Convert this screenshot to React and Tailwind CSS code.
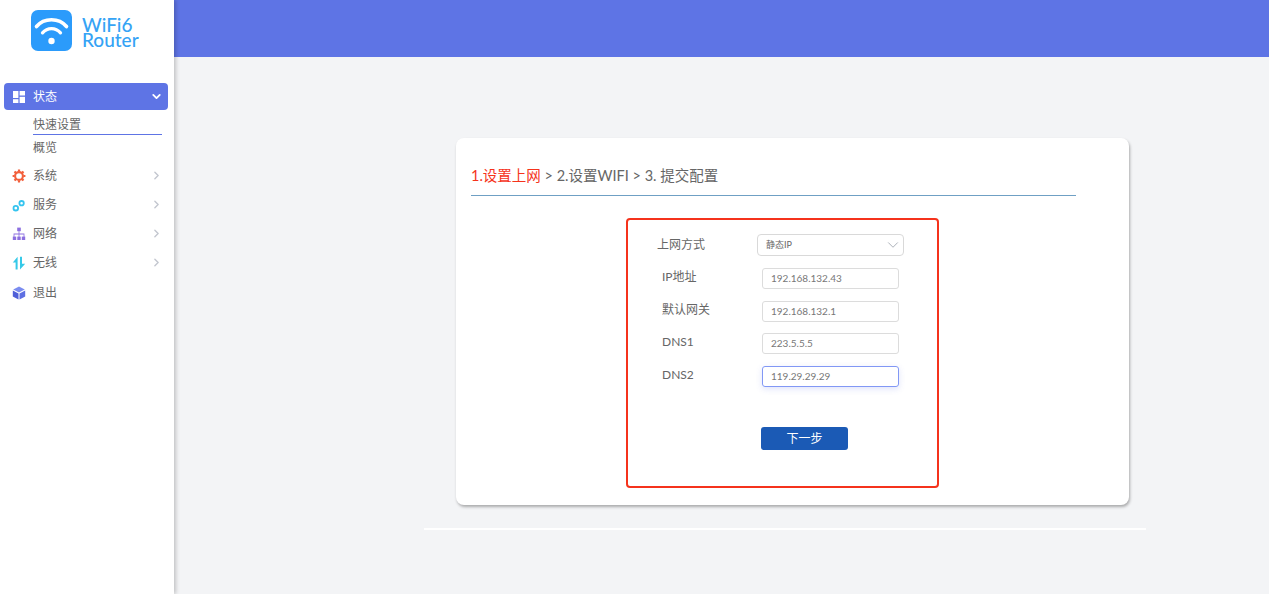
import { ChevronDown, ChevronRight } from 'lucide-react'

const FONT = 'font-["Lato","Noto_Sans_CJK_SC",sans-serif]'

function DashIcon() {
  return (
    <svg width="14" height="14" viewBox="0 0 14 14" fill="#fff">
      <rect x="1" y="1" width="5.4" height="7" />
      <rect x="7.6" y="1" width="5.4" height="4.5" />
      <rect x="1" y="9.2" width="5.4" height="3.8" />
      <rect x="7.6" y="6.8" width="5.4" height="6.2" />
    </svg>
  )
}

function GearIcon() {
  return (
    <svg width="14" height="14" viewBox="0 0 14 14">
      <circle cx="7" cy="7" r="3.9" fill="none" stroke="#f2603c" strokeWidth="2.1" />
      <g stroke="#f2603c" strokeWidth="2.2">
        <path d="M7 .6v2M7 11.4v2M.6 7h2M11.4 7h2M2.5 2.5l1.4 1.4M10.1 10.1l1.4 1.4M2.5 11.5l1.4-1.4M10.1 3.9l1.4-1.4" />
      </g>
    </svg>
  )
}

function GearsIcon() {
  return (
    <svg width="14" height="14" viewBox="0 0 14 14" fill="none" stroke="#35c4ef">
      <circle cx="9.6" cy="5.2" r="2.2" strokeWidth="1.8" />
      <circle cx="3.8" cy="10.2" r="2.3" strokeWidth="1.8" />
    </svg>
  )
}

function TreeIcon() {
  return (
    <svg width="14" height="14" viewBox="0 0 14 14" fill="#8c6fe0">
      <rect x="5.2" y=".6" width="3.6" height="3.6" />
      <rect x=".8" y="9.6" width="3.4" height="3.4" />
      <rect x="5.3" y="9.6" width="3.4" height="3.4" />
      <rect x="9.8" y="9.6" width="3.4" height="3.4" />
      <path d="M6.6 4h.8v2.6h5v3.4h-.8V7.4H7.4V10h-.8V7.4H2.4V10h-.8V6.6h5z" />
    </svg>
  )
}

function ArrowsIcon() {
  return (
    <svg width="14" height="14" viewBox="0 0 14 14" fill="#35c9e8">
      <path d="M3.6 13.4V6.4H.8L5.6.8v12.6z" />
      <path d="M8 .8h2v7h3.2L8 13.4z" />
    </svg>
  )
}

function BoxIcon() {
  return (
    <svg width="14" height="14" viewBox="0 0 14 14">
      <path d="M7 .6l5.8 3L7 6.5 1.2 3.6z" fill="#7b8cf0" />
      <path d="M.8 4.6l5.7 2.8v6.2L.8 10.6z" fill="#4f5fd8" />
      <path d="M13.2 4.6L7.5 7.4v6.2l5.7-3z" fill="#5e6fe2" />
    </svg>
  )
}

function Logo() {
  return (
    <div className="flex items-start pl-[31px] pt-[10px] h-[83px]">
      <div className="w-[41px] h-[41px] rounded-[7px] bg-[#2b9bfb]">
        <svg width="41" height="41" viewBox="0 0 41 41" fill="none" stroke="#fff" strokeLinecap="round">
          <path d="M5.5 16.5C13 7.5 28 7.5 35.5 16.5" strokeWidth="3.6" />
          <path d="M11.5 22.8C16.5 17.2 24.5 17.2 29.5 22.8" strokeWidth="3.3" />
          <circle cx="20.5" cy="31" r="3.2" fill="#fff" stroke="none" />
        </svg>
      </div>
      <div className="ml-[10px] mt-[7px] text-[#35a3f5] text-[19px] leading-[15px] font-medium">
        <div>WiFi6</div>
        <div>Router</div>
      </div>
    </div>
  )
}

function NavItem({ icon, label, arrow, className }) {
  return (
    <div className={`flex items-center h-[29px] pl-[12px] pr-[11px] text-[#666] text-[12px] ${className || ''}`}>
      <span className="w-[21px] flex">{icon}</span>
      <span>{label}</span>
      {arrow && <ChevronRight size={13} strokeWidth={2.6} className="ml-auto text-[#c3c7cf]" />}
    </div>
  )
}

function Sidebar() {
  return (
    <aside className="w-[174px] h-[594px] shrink-0 bg-white shadow-[2px_0_4px_rgba(0,0,0,0.2)] z-10">
      <Logo />
      <div className="mx-[4px] w-[164px] h-[27px] rounded-[4px] bg-[#5e74e5] flex items-center pl-[8px] pr-[5px] text-white text-[12px]">
        <span className="w-[21px] flex"><DashIcon /></span>
        <span>状态</span>
        <ChevronDown size={13} strokeWidth={3.4} className="ml-auto" />
      </div>
      <div className="ml-[33px] mt-[3px] w-[129px] h-[22px] border-b border-[#5e74e5] text-[#666] text-[12px] leading-[23px]">快速设置</div>
      <div className="ml-[33px] h-[26px] text-[#666] text-[12px] leading-[25px]">概览</div>
      <NavItem icon={<GearIcon />} label="系统" arrow />
      <NavItem icon={<GearsIcon />} label="服务" arrow />
      <NavItem icon={<TreeIcon />} label="网络" arrow />
      <NavItem icon={<ArrowsIcon />} label="无线" arrow />
      <NavItem icon={<BoxIcon />} label="退出" className="mt-[1px]" />
    </aside>
  )
}

function Field({ label, value, className, focused }) {
  return (
    <div className={`flex items-center ml-[34px] h-[21px] ${className}`}>
      <span className="w-[100px] text-[12px] leading-[17px] pb-[4px] text-[#666]">{label}</span>
      <input
        readOnly
        value={value}
        className={`w-[137px] h-[21px] rounded-[3px] border px-[8px] pb-[2px] text-[10px] text-[#777] outline-none ${focused ? 'border-[#8298f5] shadow-[0_2px_6px_rgba(94,116,229,0.2)]' : 'border-[#dcdcdc]'}`}
      />
    </div>
  )
}

export default function App() {
  return (
    <div className={`flex w-[1269px] h-[594px] overflow-hidden bg-[#f3f4f6] ${FONT}`}>
      <Sidebar />
      <main className="flex-1">
        <div className="h-[57px] bg-[#5e74e5]" />
        <div className="ml-[282px] mt-[81px] w-[673px] h-[367px] bg-white rounded-[8px] shadow-[1px_2px_3px_rgba(0,0,0,0.3)] pt-[26px]">
          <div className="ml-[15px] w-[605px] h-[32px] border-b border-[#6fa0c4] text-[14.5px] leading-[23px] text-[#666]">
            <span className="text-[#f5331c]">1.设置上网</span> &gt; 2.设置WIFI &gt; 3. 提交配置
          </div>
          <div className="ml-[170px] mt-[22px] w-[313px] h-[270px] border-2 border-[#f5331c] rounded-[4px] pt-[14px]">
            <div className="flex items-center ml-[29px] h-[22px]">
              <span className="w-[100px] text-[12px] leading-[17px] pb-[2px] text-[#666]">上网方式</span>
              <div className="w-[147px] h-[22px] rounded-[4px] border border-[#d9d9d9] flex items-center pl-[8px] pr-[1px] text-[9px] text-[#666]">
                <span>静态IP</span>
                <ChevronDown size={18} strokeWidth={1.3} className="ml-auto text-[#aab0b8]" />
              </div>
            </div>
            <Field label="IP地址" value="192.168.132.43" className="mt-[12px]" />
            <Field label="默认网关" value="192.168.132.1" className="mt-[12px]" />
            <Field label="DNS1" value="223.5.5.5" className="mt-[11px]" />
            <Field label="DNS2" value="119.29.29.29" className="mt-[12px]" focused />
            <button type="button" className="block ml-[133px] mt-[40px] w-[87px] h-[23px] rounded-[3px] bg-[#1b5ab5] text-white text-[12px]">
              下一步
            </button>
          </div>
        </div>
        <div className="ml-[250px] mt-[23px] w-[722px] h-[2px] bg-white" />
      </main>
    </div>
  )
}
